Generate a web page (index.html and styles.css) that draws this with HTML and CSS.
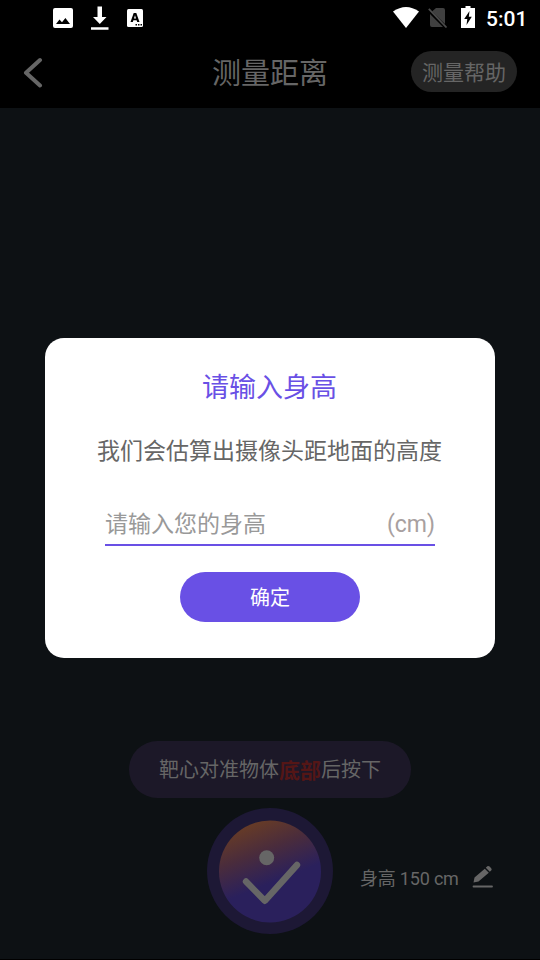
FILE: index.html
```html
<!DOCTYPE html>
<html lang="zh-CN">
<head>
<meta charset="utf-8">
<title>测量距离</title>
<link rel="stylesheet" href="styles.css">
</head>
<body>
<div class="screen">
  <div class="status">
    <div class="status-left">
      <svg width="20" height="20" viewBox="0 0 20 20"><path fill="#fff" fill-rule="evenodd" d="M2 0H18Q20 0 20 2V18Q20 20 18 20H2Q0 20 0 18V2Q0 0 2 0ZM3 16H17L12.400 10L9 14.200L6.500 11.400Z"/></svg>
      <svg width="18" height="24" viewBox="0 0 18 24"><path fill="#fff" d="M6.500 .5H11V11H15.500L8.800 18L2 11H6.500ZM0 21.300H17.500V23.700H0Z"/></svg>
      <svg width="16" height="18" viewBox="0 0 16 18"><rect width="16" height="18" rx="1.500" fill="#fff"/><path fill="#000" fill-rule="evenodd" d="M6.700 4H9.300L12.500 13H10.200L9.600 11.200H6.400L5.800 13H3.500ZM8 6.300L7 9.400H9ZM8.500 15H10V16.500H8.500ZM11 15H12.500V16.500H11ZM13.500 15H15V16.500H13.500Z"/></svg>
    </div>
    <div class="status-right">
      <svg width="26" height="21" viewBox="0 0 26 21"><path fill="#fff" d="M0 4.500Q13-4.500 26 4.500L13 21Z"/></svg>
      <svg width="20" height="21" viewBox="0 0 20 21"><path fill="#404040" d="M8 1H15Q17 1 17 3V17L4 4.500ZM2 7L15 20H4Q2 20 2 18Z"/><path d="M.8 1.800L18.500 20.500" stroke="#4c4c4c" stroke-width="1.700"/></svg>
      <svg class="battery" width="14" height="22" viewBox="0 0 14 22"><path fill="#fff" fill-rule="evenodd" d="M4.500 0H9.500V2H14V22H0V2H4.500ZM8.500 5L3.200 13H6.300L5.500 19L10.800 10.800H7.800Z"/></svg>
      <span class="clock">5:01</span>
    </div>
  </div>
  <header class="header">
    <svg class="back" width="20" height="32" viewBox="0 0 20 32"><path d="M17 4L3 16.800L17 29.500" fill="none" stroke="#666" stroke-width="4" stroke-linecap="round" stroke-linejoin="round"/></svg>
    <h1 class="title">测量距离</h1>
    <div class="help">测量帮助</div>
  </header>
  <main class="camera">
    <div class="hint">靶心对准物体<b class="hint-mark">底部</b>后按下</div>
    <div class="controls">
      <svg class="shutter" width="126" height="126" viewBox="0 0 126 126">
        <defs><linearGradient id="disc" x1=".2" y1=".04" x2=".44" y2=".64"><stop offset="0" stop-color="#6a3d24"/><stop offset=".5" stop-color="#4a2c3c"/><stop offset="1" stop-color="#2a205c"/></linearGradient></defs>
        <circle cx="63" cy="63" r="63" fill="#1d1835"/>
        <circle cx="63" cy="63.500" r="51" fill="url(#disc)"/>
        <circle cx="59.700" cy="49.800" r="7.500" fill="#666"/>
        <path d="M39 73.500L57.800 92.800L90 57" fill="none" stroke="#666" stroke-width="6.400" stroke-linecap="round" stroke-linejoin="round"/>
      </svg>
      <div class="height">
        <span class="height-value">身高 150 cm</span>
        <svg width="22" height="23" viewBox="0 0 22 23"><path fill="#666" d="M1.500 17.500L2.500 12.500L12.800 3.800L16.800 7.800L6.500 16.500ZM13.800 2.800L15.300 1.300Q16.500 .5 17.600 1.600L19.200 3.200Q20.200 4.400 19.200 5.500L17.800 6.800Z"/><path d="M1.500 21.500H20" stroke="#666" stroke-width="1.800" stroke-linecap="round"/></svg>
      </div>
    </div>
  </main>
  <section class="dialog">
    <h2 class="dialog-title">请输入身高</h2>
    <p class="dialog-text">我们会估算出摄像头距地面的高度</p>
    <div class="field"><span>请输入您的身高</span><span class="unit">(cm)</span></div>
    <div class="confirm">确定</div>
  </section>
</div>
</body>
</html>
```

FILE: styles.css
```css
* { box-sizing: border-box; }

body {
  margin: 0;
  background: #000;
  font-family: Roboto, "Noto Sans CJK SC", sans-serif;
}

svg { display: block; flex: none; }

.screen {
  position: relative;
  display: flex;
  flex-direction: column;
  width: 540px;
  height: 960px;
  overflow: hidden;
  padding-bottom: 1px;
}

.status {
  display: flex;
  justify-content: space-between;
  height: 36px;
  padding: 0 13px 0 53px;
}

.status-left, .status-right { display: flex; align-items: center; }
.status-left { gap: 18px; }
.status-right { gap: 9px; padding-bottom: 1px; }

.battery { margin: 0 0 1px 4px; }

.clock {
  width: 41px;
  margin-left: 2px;
  color: #fff;
  font-size: 21px;
  font-weight: 500;
  line-height: 36px;
  padding-top: 2px;
  white-space: nowrap;
}

.header {
  display: grid;
  grid-template-columns: 1fr auto 1fr;
  align-items: center;
  height: 72px;
  padding: 0 23px;
  color: #666;
}

.title {
  margin: 0;
  padding-top: 3px;
  font-size: 29px;
  line-height: 42px;
  font-weight: 400;
}

.help {
  justify-self: end;
  width: 106px;
  height: 41px;
  margin-bottom: 2px;
  border-radius: 21px;
  background: #242424;
  font-size: 21px;
  line-height: 44px;
  text-align: center;
}

.camera {
  flex: 1;
  display: flex;
  flex-direction: column;
  justify-content: flex-end;
  align-items: center;
  gap: 10px;
  padding-bottom: 25px;
  background: #0d1114;
}

.hint {
  width: 282px;
  height: 57px;
  border-radius: 29px;
  background: #1c1828;
  color: #666;
  font-size: 20px;
  line-height: 58px;
  text-align: center;
}

.hint-mark {
  position: relative;
  top: 1px;
  color: #541616;
  font-size: 21px;
}

.controls {
  display: grid;
  grid-template-columns: 1fr 126px 1fr;
  align-items: center;
  width: 100%;
}

.shutter { grid-column: 2; }

.height {
  display: flex;
  align-items: center;
  gap: 13px;
  padding: 11px 0 0 27px;
  color: #666;
  font-size: 18px;
  white-space: nowrap;
}

.height-value { letter-spacing: -.2px; }

.dialog {
  position: absolute;
  top: 338px;
  left: 45px;
  width: 450px;
  height: 320px;
  border-radius: 19px;
  padding: 30px 60px 36px;
  display: flex;
  flex-direction: column;
  align-items: center;
  background: #fff;
}

.dialog-title {
  margin: 0 1px 0 0;
  color: #6950e5;
  font-size: 27px;
  line-height: 40px;
  font-weight: 400;
}

.dialog-text {
  margin: 26px 1px 0 0;
  color: #666;
  font-size: 23px;
  line-height: 36px;
  white-space: nowrap;
}

.field {
  display: flex;
  justify-content: space-between;
  width: 330px;
  height: 44px;
  margin-top: 32px;
  border-bottom: 2px solid #6950e5;
  color: #999;
  font-size: 23px;
  line-height: 46px;
}

.unit { color: #a8a0a0; }

.confirm {
  width: 180px;
  height: 50px;
  margin-top: 26px;
  border-radius: 25px;
  background: #6950e5;
  color: #fff;
  font-size: 20px;
  line-height: 52px;
  text-align: center;
}
```
